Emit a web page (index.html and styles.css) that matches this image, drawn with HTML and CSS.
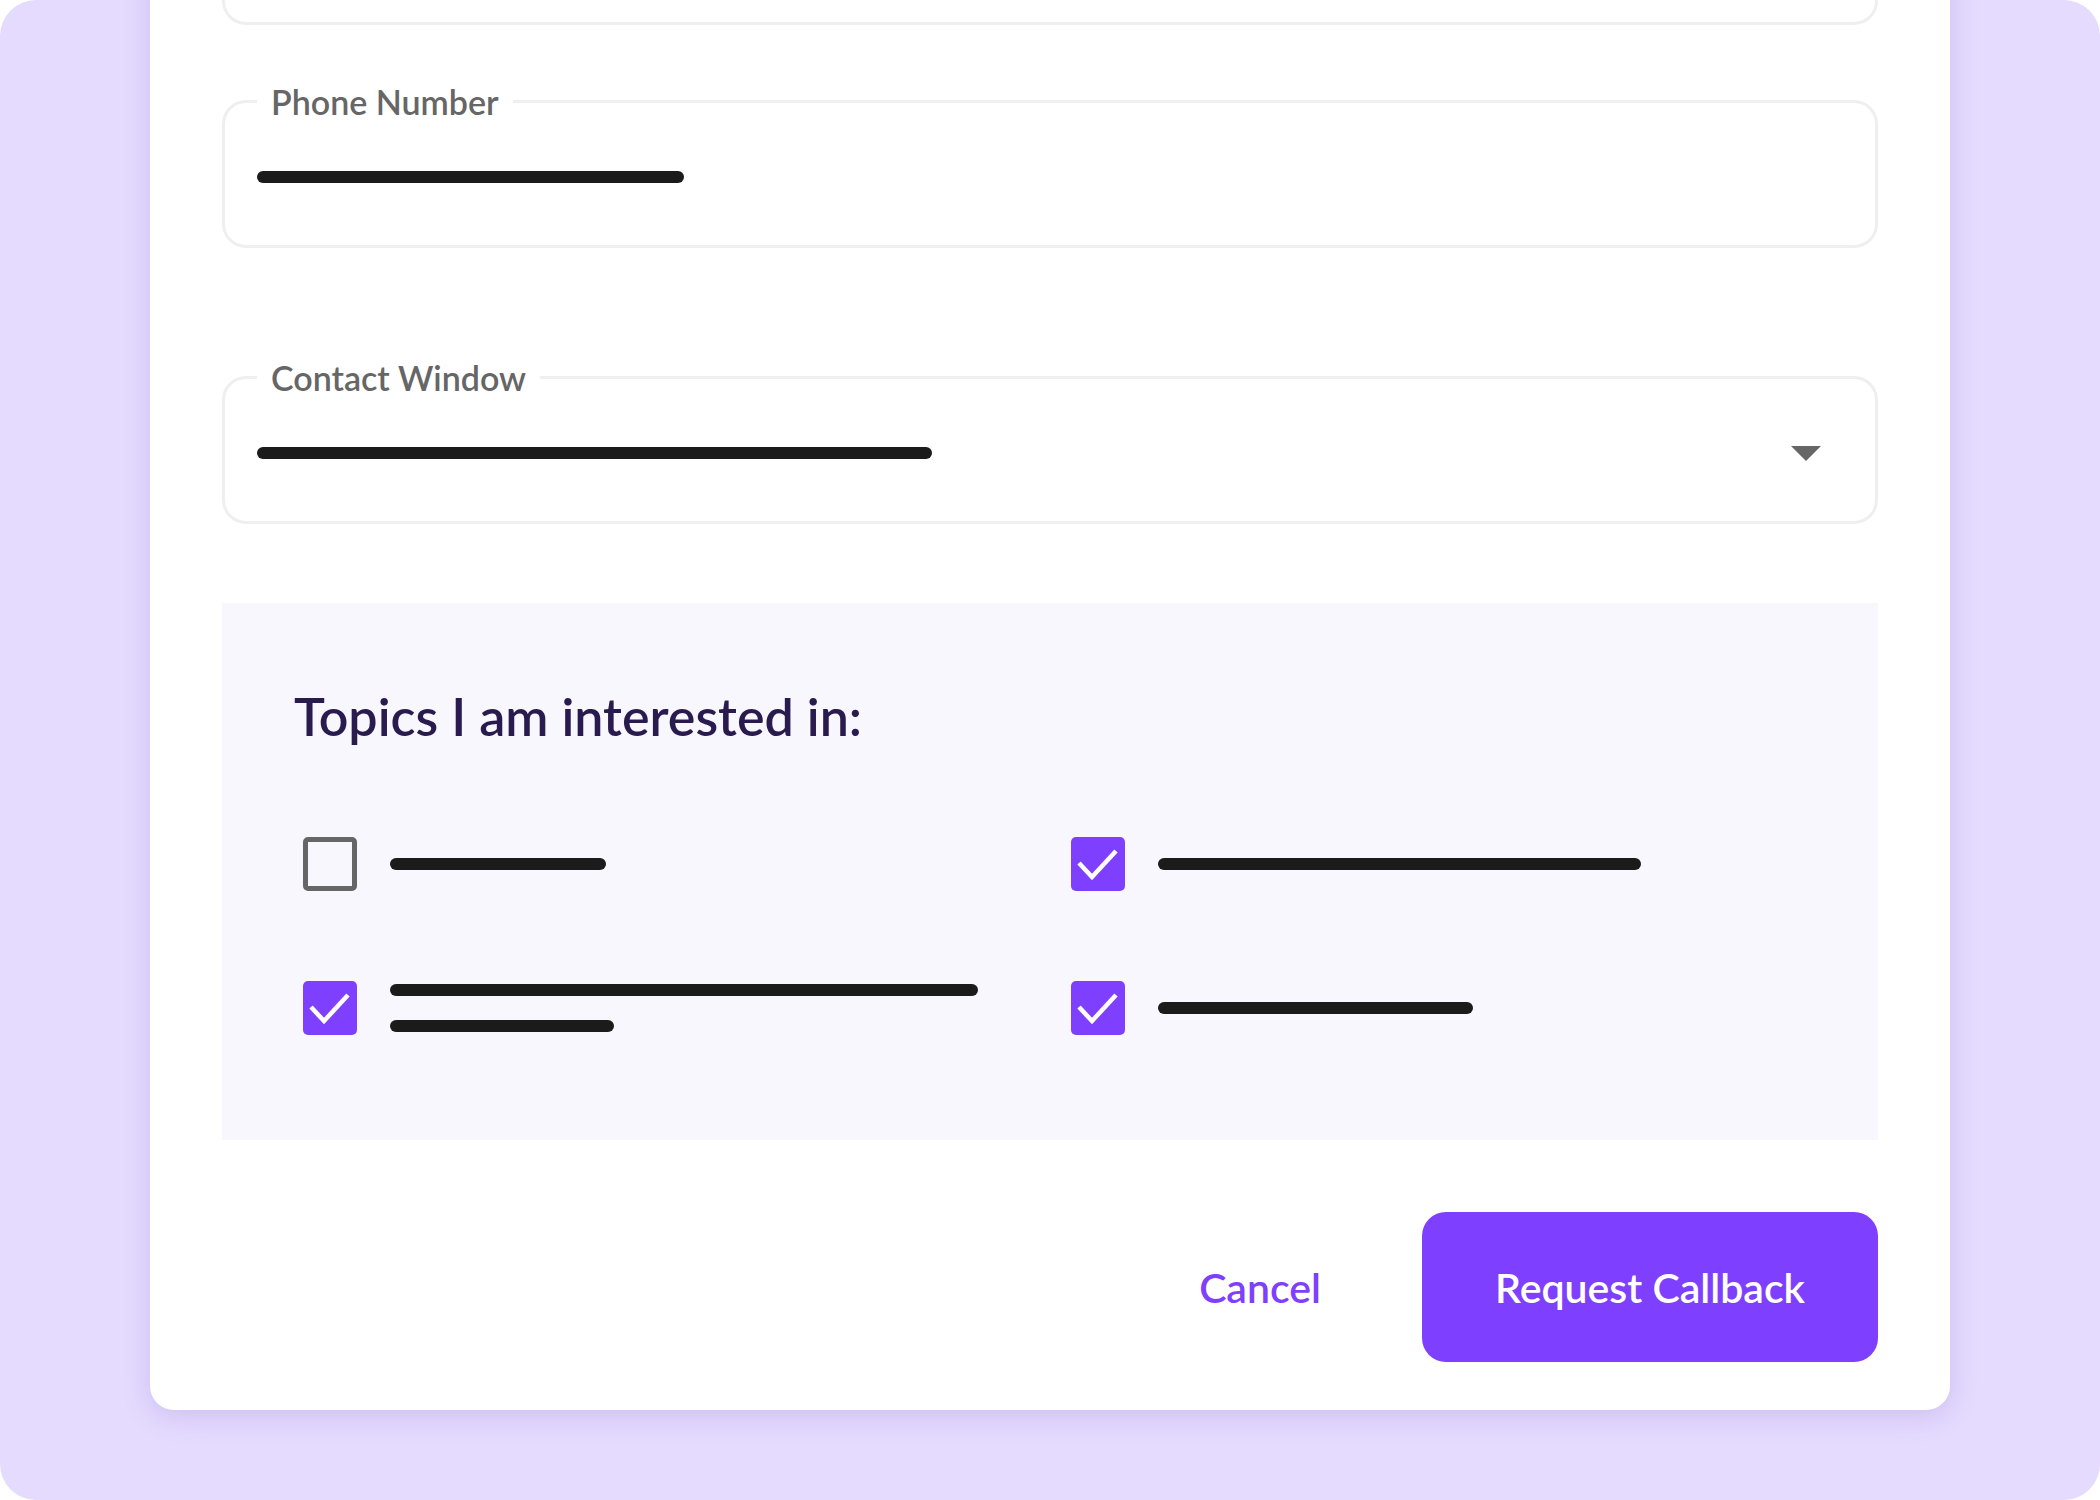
FILE: index.html
```html
<!DOCTYPE html>
<html lang="en">
<head>
    <meta charset="UTF-8">
    <meta name="viewport" content="width=device-width, initial-scale=1.0">
    <title>Request a Callback</title>
    <link rel="stylesheet" href="styles.css">
</head>
<body>
    <div class="page">
        <form class="card" id="callbackForm">
            <div class="form-group">
                <div class="field">
                    <span class="bar bar-email"></span>
                </div>
            </div>

            <div class="form-group form-group-wide">
                <div class="field">
                    <label class="field-label">Phone Number</label>
                    <span class="bar bar-phone"></span>
                </div>
            </div>

            <div class="form-group">
                <div class="field">
                    <label class="field-label">Contact Window</label>
                    <span class="bar bar-window"></span>
                    <svg class="caret" width="30" height="15" viewBox="0 0 30 15">
                        <path d="M0 0H30L15 15Z" fill="#666666"/>
                    </svg>
                </div>
            </div>

            <div class="topics">
                <h2>Topics I am interested in:</h2>
                <div class="topic-grid">
                    <label class="topic">
                        <span class="checkbox"></span>
                        <span class="topic-text"><span class="bar bar-t1"></span></span>
                    </label>
                    <label class="topic">
                        <span class="checkbox checked">
                            <svg width="54" height="54" viewBox="0 0 54 54"><polyline points="8,26 21,40 45,14" fill="none" stroke="#fff" stroke-width="4.5"/></svg>
                        </span>
                        <span class="topic-text"><span class="bar bar-t2"></span></span>
                    </label>
                    <label class="topic">
                        <span class="checkbox checked">
                            <svg width="54" height="54" viewBox="0 0 54 54"><polyline points="8,26 21,40 45,14" fill="none" stroke="#fff" stroke-width="4.5"/></svg>
                        </span>
                        <span class="topic-text">
                            <span class="bar bar-t3a"></span>
                            <span class="bar bar-t3b"></span>
                        </span>
                    </label>
                    <label class="topic">
                        <span class="checkbox checked">
                            <svg width="54" height="54" viewBox="0 0 54 54"><polyline points="8,26 21,40 45,14" fill="none" stroke="#fff" stroke-width="4.5"/></svg>
                        </span>
                        <span class="topic-text"><span class="bar bar-t4"></span></span>
                    </label>
                </div>
            </div>

            <div class="actions">
                <button type="button" class="btn-text">Cancel</button>
                <button type="submit" class="btn-primary">Request Callback</button>
            </div>
        </form>
    </div>
</body>
</html>
```

FILE: styles.css
```css
* {
    box-sizing: border-box;
}

body {
    margin: 0;
    background: #ffffff;
    font-family: 'Lato', 'Open Sans', sans-serif;
}

.page {
    height: 1500px;
    padding: 0 150px;
    background: #e5dbfe;
    border-radius: 36px;
    overflow: hidden;
}

.card {
    margin-top: -195px;
    padding: 72px 72px 48px;
    background: white;
    border-radius: 24px;
    box-shadow: 0 6px 28px rgba(96, 60, 190, 0.18);
}

.form-group {
    margin-bottom: 75px;
}

.form-group-wide {
    margin-bottom: 128px;
}

.form-group + .form-group + .form-group {
    margin-bottom: 79px;
}

.field {
    position: relative;
    display: flex;
    align-items: center;
    height: 148px;
    padding: 6px 54px 0 32px;
    border: 3px solid #efefef;
    border-radius: 24px;
}

.field-label {
    position: absolute;
    top: -21px;
    left: 32px;
    padding: 0 14px;
    background: white;
    color: #666666;
    font-size: 34px;
    line-height: 40px;
    font-weight: 600;
}

.caret {
    margin-left: auto;
}

.bar {
    display: block;
    height: 12px;
    border-radius: 6px;
    background: #1b1b1b;
    flex: none;
}

.bar-email { width: 520px; }
.bar-phone { width: 427px; }
.bar-window { width: 675px; }
.bar-t1 { width: 216px; }
.bar-t2 { width: 483px; }
.bar-t3a { width: 588px; }
.bar-t3b { width: 224px; }
.bar-t4 { width: 315px; }

.topics {
    padding: 83px 72px 96px;
    background: #f8f7fe;
}

.topics h2 {
    margin: 0 0 91px;
    color: #2a1b4e;
    font-size: 52px;
    line-height: 60px;
    font-weight: 600;
}

.topic-grid {
    display: grid;
    grid-template-columns: 1fr 1fr;
    column-gap: 24px;
    row-gap: 81px;
    align-items: center;
}

.topic {
    display: flex;
    align-items: center;
    gap: 33px;
    padding-left: 9px;
}

.checkbox {
    display: block;
    flex: none;
    width: 54px;
    height: 54px;
    border: 5px solid #666666;
    border-radius: 5px;
}

.checkbox.checked {
    border: none;
    background: #7f3ffe;
}

.checkbox svg {
    display: block;
}

.topic-text {
    display: flex;
    flex-direction: column;
}

.topic-text .bar {
    margin: 12px 0;
}

.actions {
    display: flex;
    justify-content: flex-end;
    align-items: center;
    margin-top: 72px;
}

button {
    font-family: 'Lato', 'Open Sans', sans-serif;
    font-size: 41px;
    font-weight: 600;
    border: none;
    cursor: pointer;
}

.btn-text {
    margin-right: 61px;
    padding: 0 40px;
    background: none;
    color: #7f3ffe;
}

.btn-primary {
    width: 456px;
    height: 150px;
    border-radius: 24px;
    background: #7f3ffe;
    color: white;
}
```
